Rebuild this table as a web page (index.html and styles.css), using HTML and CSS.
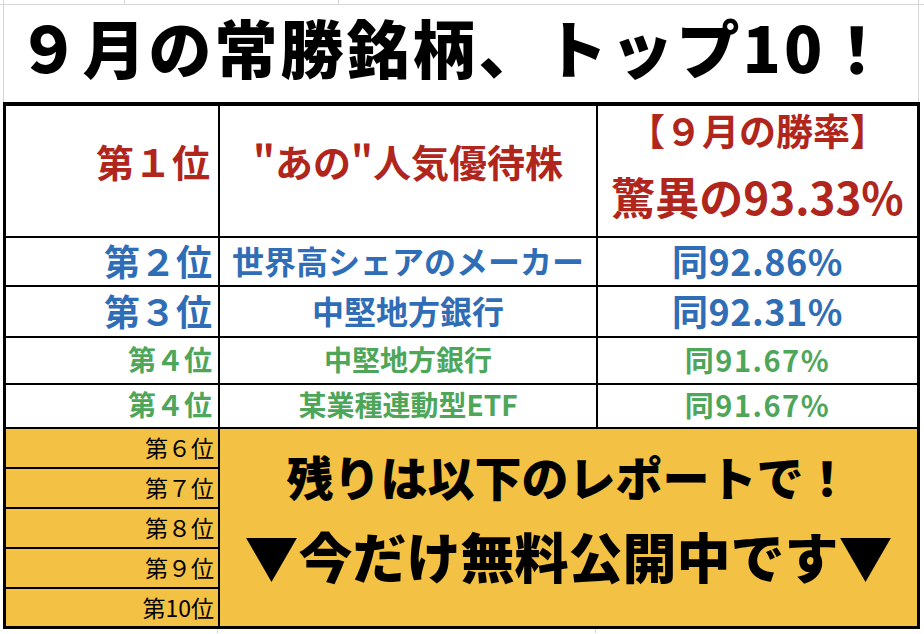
FILE: index.html
```html
<!DOCTYPE html>
<html lang="ja">
<head>
<meta charset="utf-8">
<title>9月の常勝銘柄、トップ10！</title>
<link rel="stylesheet" href="styles.css">
</head>
<body>
<div class="sheet">
  <div class="title">９月の常勝銘柄、トップ10！</div>
  <div class="table">
    <div class="cell rank red r1">第１位</div>
    <div class="cell name red r1">"あの"人気優待株</div>
    <div class="cell rate red two"><span class="l1">【９月の勝率】</span><span class="l2">驚異の93.33%</span></div>

    <div class="cell rank blue big">第２位</div>
    <div class="cell name blue mid">世界高シェアのメーカー</div>
    <div class="cell rate blue big">同92.86%</div>

    <div class="cell rank blue big">第３位</div>
    <div class="cell name blue mid">中堅地方銀行</div>
    <div class="cell rate blue big">同92.31%</div>

    <div class="cell rank green sm">第４位</div>
    <div class="cell name green sm">中堅地方銀行</div>
    <div class="cell rate green sm">同91.67%</div>

    <div class="cell rank green sm">第４位</div>
    <div class="cell name green sm">某業種連動型ETF</div>
    <div class="cell rate green sm">同91.67%</div>

    <div class="cell yrank">第６位</div>
    <div class="cell promo"><span class="p1">残りは以下のレポートで！</span><span class="p2">▼今だけ無料公開中です▼</span></div>
    <div class="cell yrank">第７位</div>
    <div class="cell yrank">第８位</div>
    <div class="cell yrank">第９位</div>
    <div class="cell yrank">第10位</div>
  </div>
  <div class="botrow"><span class="b1"></span><span class="b2"></span></div>
</div>
</body>
</html>
```

FILE: styles.css
```css
html, body {
  margin: 0;
  padding: 0;
  background: #ffffff;
}
.sheet {
  width: 924px;
  height: 634px;
  overflow: hidden;
  font-family: "Noto Sans CJK JP", "Noto Sans", sans-serif;
  display: flex;
  flex-direction: column;
}
.title {
  height: 102px;
  flex: none;
  display: flex;
  align-items: flex-start;
  justify-content: center;
  padding-right: 16px;
  box-sizing: border-box;
  font-size: 63px;
  line-height: normal;
  font-weight: 900;
  color: #000;
  letter-spacing: 3px;
  background:
    linear-gradient(#d6d6d6, #d6d6d6) 0 4px / 100% 1px no-repeat,
    linear-gradient(#d6d6d6, #d6d6d6) 124px 0 / 1px 5px no-repeat,
    linear-gradient(#d6d6d6, #d6d6d6) 338px 0 / 1px 5px no-repeat,
    linear-gradient(#d6d6d6, #d6d6d6) 3px 0 / 1px 100% no-repeat,
    linear-gradient(#d6d6d6, #d6d6d6) 918px 0 / 1px 100% no-repeat,
    #ffffff;
}
.table {
  margin-left: 3px;
  width: 917px;
  flex: none;
  box-sizing: border-box;
  background: #000;
  padding: 4px 3px 3px 3px;
  display: grid;
  grid-template-columns: 212px 376px 319px;
  grid-template-rows: 130px 47px 49px 45px 42px 38px 38px 38px 38px 37px;
  gap: 2px;
}
.cell {
  background: #fff;
  display: flex;
  align-items: center;
  font-weight: 700;
  white-space: nowrap;
  padding-bottom: 4px;
  box-sizing: border-box;
}
.rank {
  justify-content: flex-end;
  padding-right: 6px;
}
.name, .rate {
  justify-content: center;
}
.red { color: #b0261d; }
.blue { color: #2f6db6; }
.green { color: #4ea65a; }
.r1 {
  font-size: 38px;
  padding-bottom: 22px;
}
.rank.r1 { padding-right: 8px; }
.two {
  flex-direction: column;
  justify-content: center;
  padding-bottom: 16px;
  line-height: 66px;
}
.l1 { font-size: 37px; }
.l2 { font-size: 44px; }
.big { font-size: 36px; }
.mid { font-size: 32px; }
.sm { font-size: 28px; }
.rate.big { letter-spacing: 0.5px; }
.rate.sm { font-size: 29px; letter-spacing: 1.5px; }
.yrank {
  background: #f3c143;
  color: #000;
  font-weight: 400;
  font-size: 23px;
  justify-content: flex-end;
  padding-right: 4px;
  padding-bottom: 2px;
}
.promo {
  grid-column: 2 / 4;
  grid-row: 6 / 11;
  background: #f3c143;
  color: #000;
  font-weight: 900;
  flex-direction: column;
  justify-content: center;
  padding-bottom: 24px;
}
.p1 {
  font-size: 47px;
  line-height: 80px;
}
.p2 {
  font-size: 54px;
  line-height: 80px;
}
.botrow {
  height: 4px;
  flex: none;
  display: grid;
  grid-template-columns: 218px 378px 1fr;
}
.botrow span { border-right: 1px solid #d6d6d6; }
```
